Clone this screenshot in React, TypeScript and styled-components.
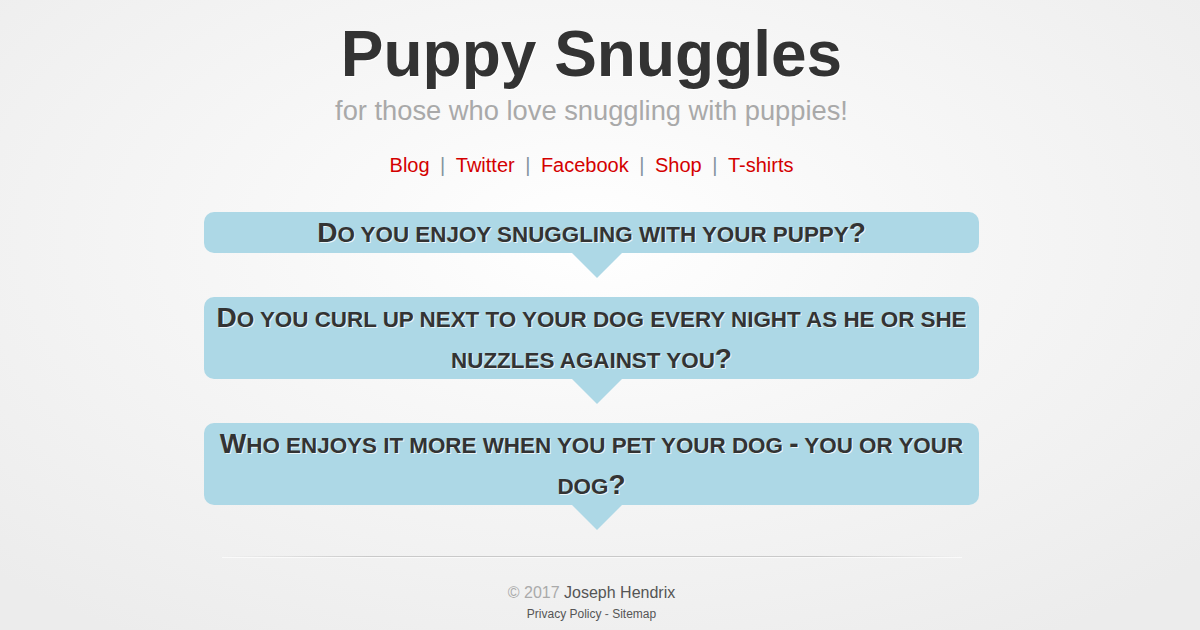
import React from "react";
import styled, { createGlobalStyle } from "styled-components";

const GlobalStyle = createGlobalStyle`
  html, body {
    margin: 0;
    padding: 0;
  }
  body {
    font-family: "Liberation Sans", Arial, sans-serif;
    background: #ececec;
  }
`;

const Page = styled.div`
  min-height: 630px;
  box-sizing: border-box;
  background: radial-gradient(ellipse 70% 75% at 49% 38%, #ffffff 0%, #f7f7f7 40%, #ececec 100%);
  display: flex;
  flex-direction: column;
  align-items: center;
  padding: 19px 17px 0 0;
`;

const Header = styled.header`
  display: flex;
  flex-direction: column;
  align-items: center;
`;

const Title = styled.h1`
  margin: 0;
  font-size: 64px;
  line-height: 71px;
  font-weight: 700;
  color: #333333;
  text-shadow: 1px 1px 0 #ffffff;
`;

const Tagline = styled.p`
  margin: 4px 0 0;
  font-size: 27.3px;
  line-height: 34px;
  color: #a9a9a9;
`;

const Nav = styled.nav`
  margin-top: 25px;
  display: flex;
  align-items: center;
  gap: 10.5px;
  font-size: 20px;
  line-height: 24px;
`;

const NavLink = styled.a`
  color: #d40000;
  text-decoration: none;
`;

const Pipe = styled.span`
  color: #8594a0;
`;

const Questions = styled.main`
  margin-top: 35px;
  width: 775px;
  display: flex;
  flex-direction: column;
  gap: 44px;
`;

const Bubble = styled.div`
  position: relative;
  background: #add8e6;
  border-radius: 10px;
  padding: 0 5px;
  text-align: center;
  font-size: 28px;
  line-height: 41px;
  font-weight: 700;
  color: #333333;
  text-shadow: 1px 1px 0 rgba(255, 255, 255, 0.75);

  &::after {
    content: "";
    position: absolute;
    top: 100%;
    left: calc(50% - 20px);
    border-style: solid;
    border-width: 25px 25px 0 25px;
    border-color: #add8e6 transparent transparent transparent;
  }
`;

const Small = styled.span`
  font-size: 0.8em;
  line-height: 1;
  text-transform: uppercase;
`;

const Footer = styled.footer`
  margin-top: 51px;
  width: 100%;
  display: flex;
  flex-direction: column;
  align-items: center;
`;

const Divider = styled.div`
  width: 740px;
  height: 1px;
  background: linear-gradient(to right, rgba(200, 200, 200, 0) 0%, #c9c9c9 20%, #c9c9c9 80%, rgba(200, 200, 200, 0) 100%);
  box-shadow: 0 1px 0 #fafafa;
`;

const Copy = styled.p`
  margin: 26px 0 0;
  font-size: 16px;
  line-height: 20px;
  color: #555555;
`;

const Muted = styled.span`
  color: #aaaaaa;
`;

const Links = styled.p`
  margin: 3px 0 0;
  font-size: 12px;
  line-height: 16px;
  color: #666666;
`;

const FootLink = styled.a`
  color: #555555;
  text-decoration: none;
`;

function SmallCaps({ text }: { text: string }) {
  const parts = text.match(/[a-z ]+|[^a-z ]+/g) || [];
  return (
    <>
      {parts.map((p, i) =>
        /[a-z]/.test(p) || p === " " ? <Small key={i}>{p}</Small> : <React.Fragment key={i}>{p}</React.Fragment>
      )}
    </>
  );
}

const links = ["Blog", "Twitter", "Facebook", "Shop", "T-shirts"];

const questions = [
  "Do you enjoy snuggling with your puppy?",
  "Do you curl up next to your dog every night as he or she nuzzles against you?",
  "Who enjoys it more when you pet your dog - you or your dog?",
];

export default function App() {
  return (
    <>
      <GlobalStyle />
      <Page>
        <Header>
          <Title>Puppy Snuggles</Title>
          <Tagline>for those who love snuggling with puppies!</Tagline>
          <Nav>
            {links.map((l, i) => (
              <React.Fragment key={l}>
                {i > 0 && <Pipe>|</Pipe>}
                <NavLink href="#">{l}</NavLink>
              </React.Fragment>
            ))}
          </Nav>
        </Header>
        <Questions>
          {questions.map((q) => (
            <Bubble key={q}>
              <SmallCaps text={q} />
            </Bubble>
          ))}
        </Questions>
        <Footer>
          <Divider />
          <Copy>
            <Muted>© 2017</Muted> Joseph Hendrix
          </Copy>
          <Links>
            <FootLink href="#">Privacy Policy</FootLink> - <FootLink href="#">Sitemap</FootLink>
          </Links>
        </Footer>
      </Page>
    </>
  );
}
